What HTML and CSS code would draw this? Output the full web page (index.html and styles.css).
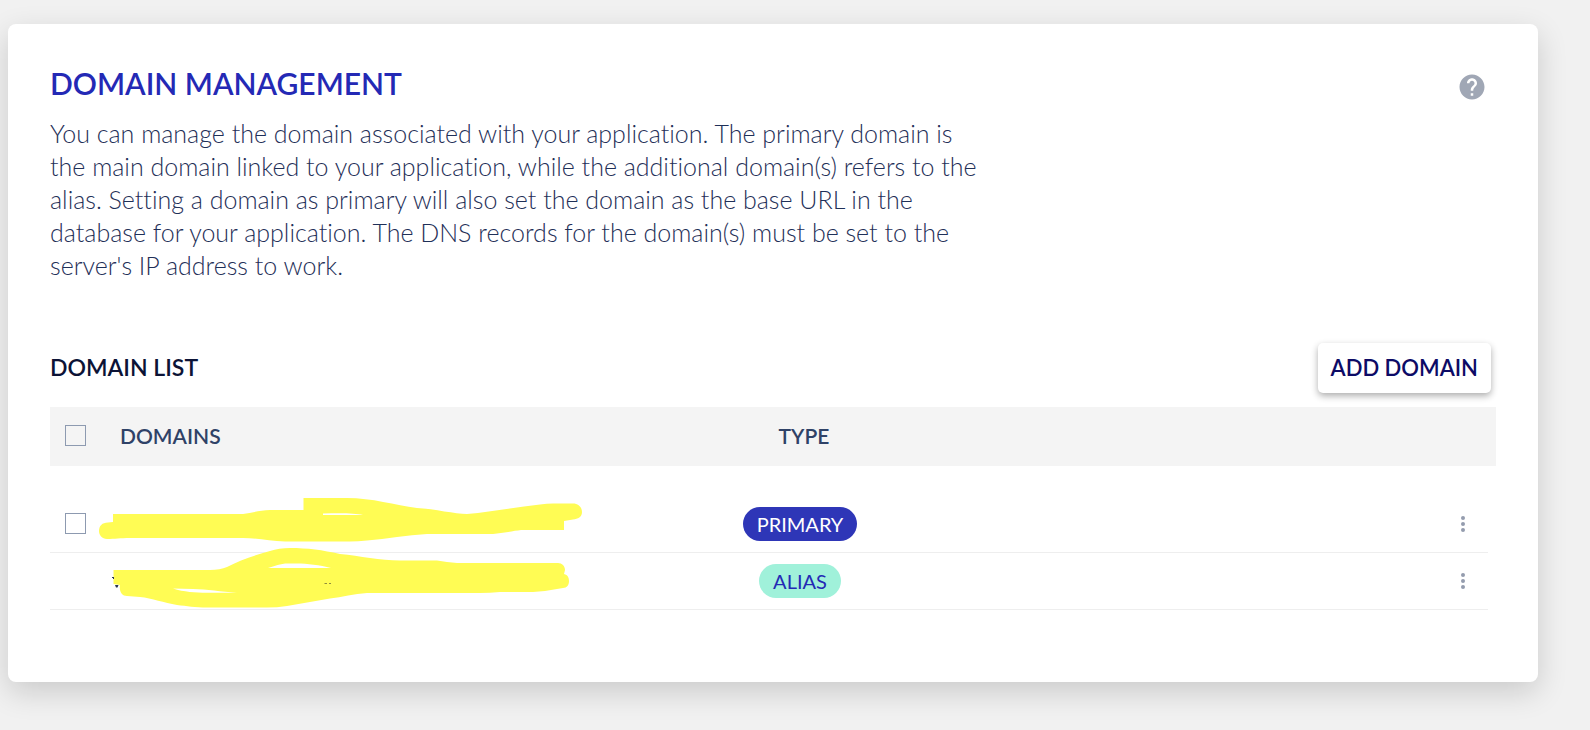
FILE: index.html
```html
<!DOCTYPE html>
<html lang="en">
<head>
<meta charset="utf-8">
<meta name="viewport" content="width=device-width, initial-scale=1">
<title>Domain Management</title>
<link rel="stylesheet" href="styles.css">
</head>
<body>
<main class="card">
  <header class="card-head">
    <div class="intro">
      <h1 class="title">DOMAIN MANAGEMENT</h1>
      <p class="lead">You can manage the domain associated with your application. The primary domain is the main domain linked to your application, while the additional domain(s) refers to the alias. Setting a domain as primary will also set the domain as the base URL in the database for your application. The DNS records for the domain(s) must be set to the server's IP address to work.</p>
    </div>
    <button class="icon-button help" type="button" aria-label="Help">
      <svg width="30" height="30" viewBox="0 0 24 24" fill="currentColor" aria-hidden="true"><path d="M12 2C6.480 2 2 6.480 2 12s4.480 10 10 10 10-4.480 10-10S17.520 2 12 2zm1 17h-2v-2h2v2zm2.070-7.750l-.9.920C13.450 12.900 13 13.500 13 15h-2v-.5c0-1.100.45-2.100 1.170-2.830l1.240-1.260c.37-.36.59-.86.59-1.410 0-1.100-.9-2-2-2s-2 .9-2 2H8c0-2.210 1.790-4 4-4s4 1.790 4 4c0 .88-.36 1.680-.93 2.250z"/></svg>
    </button>
  </header>

  <div class="list-head">
    <h2 class="subtitle">DOMAIN LIST</h2>
    <button class="add-button" type="button">ADD DOMAIN</button>
  </div>

  <div class="list">
    <table class="domains">
      <thead class="domains-head">
        <tr class="row">
          <th><input class="check" type="checkbox" aria-label="Select all domains"></th>
          <th class="name">DOMAINS</th>
          <th class="type">TYPE</th>
          <th></th>
        </tr>
      </thead>
      <tbody class="domains-body">
        <tr class="row">
          <td><input class="check" type="checkbox" aria-label="Select primary domain"></td>
          <td></td>
          <td class="type"><span class="pill primary">PRIMARY</span></td>
          <td class="actions">
            <button class="icon-button more" type="button" aria-label="Primary domain options">
              <svg width="24" height="24" viewBox="0 0 24 24" fill="currentColor" aria-hidden="true"><circle cx="12" cy="6" r="2"/><circle cx="12" cy="12" r="2"/><circle cx="12" cy="18" r="2"/></svg>
            </button>
          </td>
        </tr>
        <tr class="row">
          <td></td>
          <td></td>
          <td class="type"><span class="pill alias">ALIAS</span></td>
          <td class="actions">
            <button class="icon-button more" type="button" aria-label="Alias domain options">
              <svg width="24" height="24" viewBox="0 0 24 24" fill="currentColor" aria-hidden="true"><circle cx="12" cy="6" r="2"/><circle cx="12" cy="12" r="2"/><circle cx="12" cy="18" r="2"/></svg>
            </button>
          </td>
        </tr>
      </tbody>
    </table>
    <svg class="marker" width="500" height="125" viewBox="90 490 500 125" aria-hidden="true">
      <g fill="#fffc54" fill-rule="evenodd">
        <path d="M113 514H243C252 513 260 510 270 510H303.500V498H347C372 498 395 505 417 508C435 509 455 514 467 514C492 512 516 507 540 504.500Q547 503.500 553 503.500H573C578 503.500 582 507 582 512C582 517 578 519 573 519.500L564 521V530H521C512 531 500 534 487 534H427C407 535 387 539 367 540.500Q358 541.500 350 541.500H285C270 541.500 257 538 243 538H130C120 538 115 539 107 539C102 539 99 535 99 531C99 526 102 522.500 108 522.500L113 522ZM323 513.500V515H363C355 513 340 513 323 513.500Z"/>
        <path d="M113.500 570H210Q220 570 227 567C240 560 256 555 270 551Q279 548 290 548C308 548 322 550 340 554C360 556 380 560.500 400 560.500H437Q447 562 457 563H558C562 563 565 566 565 570L564 574C568 575 569 578 569 581C569 585 567 588 563 588Q548 591 533 592H500Q490 593 480 593H367C354 594 342 597 330 598.500L287 606Q277 607.500 267 607.500H207C195 607.500 187 606 177 605C164 603 152 598 140 597L127 596C122 596 119 592 120 585L113.500 584ZM268 568H331C320 565 307 563.500 297 563.500H288C280 563.500 275 566 268 568ZM173 588.500C184 592 195 592.700 207 592.700H237C221 592 207 589 193 589Z"/>
      </g>
      <path d="M112 577h2v2h-1v-1h-1zM115 585h3.500l-1 2.500h-1.500z" fill="#2b3655"/>
      <path d="M324.500 583.500h2.500m2 0h2" stroke="#8f8d3c" fill="none"/>
    </svg>
  </div>
</main>
</body>
</html>
```
FILE: styles.css
```css
* {
  box-sizing: border-box;
}

body {
  margin: 0;
  padding: 24px 52px 48px 8px;
  background: #f1f1f1;
  color: #2f4267;
  font-family: Lato, "Open Sans", sans-serif;
  font-variant-ligatures: none;
}

.card {
  padding: 39px 42px 72px;
  border-radius: 8px;
  background: #fff;
  box-shadow: 0 10px 30px rgba(0, 0, 0, 0.16);
}

.card-head {
  display: flex;
  justify-content: space-between;
  align-items: flex-start;
  gap: 24px;
}

.intro {
  max-width: 928px;
}

.title {
  margin: 0 0 14px;
  color: #2429b5;
  font-size: 30px;
  line-height: 40px;
  font-weight: 600;
}

.lead {
  margin: 0;
  color: #1f3058;
  font-size: 25px;
  line-height: 33px;
  font-weight: 300;
}

.icon-button {
  display: flex;
  align-items: center;
  justify-content: center;
  padding: 0;
  border: 0;
  background: none;
  color: #949cae;
}

.help {
  width: 30px;
  height: 30px;
  margin: 9px 9px 0 0;
  color: #a0a7b5;
}

.list-head {
  display: flex;
  justify-content: space-between;
  align-items: center;
  margin-top: 61px;
  padding-right: 5px;
}

.subtitle {
  margin: 0;
  padding-bottom: 2px;
  color: #0c1336;
  font-size: 23px;
  line-height: 32px;
  font-weight: 600;
}

.add-button {
  height: 50px;
  padding: 0 13px 2px;
  border: 0;
  border-radius: 5px;
  background: #fff;
  box-shadow: 0 3px 7px rgba(0, 0, 0, 0.32);
  color: #0d0b66;
  font: inherit;
  font-size: 22px;
  font-weight: 600;
}

.list {
  position: relative;
  margin-top: 14px;
}

.domains,
.domains-head,
.domains-body {
  display: block;
}

.row {
  display: grid;
  grid-template-columns: 70px 1fr 140px 1fr;
  align-items: center;
  padding-right: 8px;
}

.row th,
.row td {
  padding: 0;
  text-align: left;
}

.domains-head {
  background: #f4f4f4;
  font-size: 21px;
}

.domains-head .row {
  height: 59px;
  padding-bottom: 2px;
}

.domains-head th {
  font-weight: 600;
}

.domains-body {
  padding: 30px 8px 0 0;
}

.domains-body .row {
  height: 57px;
  border-bottom: 1px solid #eee;
}

.row .type {
  text-align: center;
}

.check {
  display: block;
  appearance: none;
  width: 21px;
  height: 21px;
  margin: 0 0 0 15px;
  border: 1px solid #8d9ab0;
}

.domains-body .check {
  margin-bottom: 2px;
}

.pill {
  display: inline-block;
  padding: 0 14px;
  border-radius: 17px;
  font-size: 20px;
  line-height: 34px;
}

.primary {
  background: #2e36b7;
  color: #fff;
}

.alias {
  background: #a0f1da;
  color: #2429b5;
}

.actions {
  display: flex;
  justify-content: flex-end;
}

.more {
  width: 34px;
  height: 34px;
}

.marker {
  position: absolute;
  top: 83px;
  left: 40px;
  pointer-events: none;
}
```
